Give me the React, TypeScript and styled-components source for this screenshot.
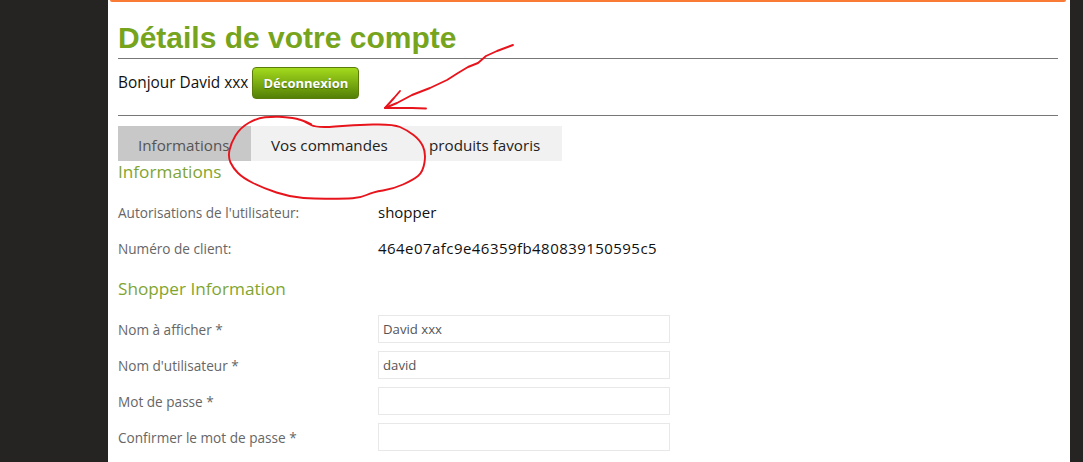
import React from "react";
import styled, { createGlobalStyle } from "styled-components";

const Global = createGlobalStyle`
  html, body { margin: 0; padding: 0; height: 462px; overflow: hidden; background: #252423; }
  #root { height: 462px; }
`;

const Stage = styled.div`
  position: relative;
  width: 1083px;
  height: 462px;
  overflow: hidden;
  background: #252423;
`;

const Page = styled.main`
  box-sizing: border-box;
  width: 962px;
  height: 462px;
  margin-left: 108px;
  padding: 0 12px 0 2px;
  background: #fff;
  font-family: "Open Sans", "Noto Sans", sans-serif;
  overflow: hidden;
`;

const TopBar = styled.div`
  width: 956px;
  height: 2px;
  background: #f97b35;
  border-radius: 0 0 6px 6px;
`;

const Content = styled.div`
  padding-left: 8px;
`;

const Title = styled.h1`
  margin: 0;
  padding-top: 16px;
  height: 40px;
  font: bold 30px/39px "Liberation Sans", Arial, sans-serif;
  color: #76a41c;
`;

const Rule = styled.hr`
  margin: 0;
  border: 0;
  height: 1px;
  background: #777;
`;

const Greeting = styled.div`
  display: flex;
  align-items: center;
  gap: 4px;
  height: 56px;
  padding-bottom: 8px;
  box-sizing: border-box;
  font-size: 15.4px;
  line-height: 20px;
  color: #111;
`;

const LogoutButton = styled.button`
  box-sizing: border-box;
  width: 107px;
  height: 32px;
  padding: 0;
  border: 1px solid #5a7d0a;
  border-radius: 4px;
  background: linear-gradient(#a3da1d, #548006);
  color: #fff;
  font: bold 13px "Open Sans", sans-serif;
  text-shadow: 0 1px 1px rgba(0, 0, 0, 0.35);
`;

const Tabs = styled.div`
  display: flex;
  margin-top: 10px;
  height: 35px;
`;

const Tab = styled.div<{ $active?: boolean; $width: number }>`
  box-sizing: border-box;
  width: ${(p) => p.$width}px;
  padding-left: 20px;
  font-size: 15.2px;
  line-height: 39px;
  white-space: nowrap;
  overflow: hidden;
  background: ${(p) => (p.$active ? "#c8c8c8" : "#f1f1f1")};
  color: ${(p) => (p.$active ? "#555" : "#222")};
`;

const SectionTitle = styled.h2<{ $top: number }>`
  margin: ${(p) => p.$top}px 0 0;
  font-size: 17.2px;
  font-weight: 400;
  line-height: 22px;
  color: #7fa531;
`;

const InfoRows = styled.div`
  display: flex;
  flex-direction: column;
  margin-top: 19px;
  gap: 16px;
`;

const InfoRow = styled.div`
  display: grid;
  grid-template-columns: 260px auto;
  align-items: center;
  height: 20px;
`;

const Label = styled.span`
  font-size: 13.6px;
  color: #666;
`;

const Value = styled.span<{ $spaced?: boolean }>`
  font-size: 15px;
  letter-spacing: ${(p) => (p.$spaced ? "0.45px" : "0")};
  color: #111;
`;

const Form = styled.div`
  display: flex;
  flex-direction: column;
  gap: 8px;
  margin-top: 15px;
`;

const FormRow = styled.label`
  display: grid;
  grid-template-columns: 260px 292px;
  align-items: center;
  height: 28px;
`;

const Field = styled.input`
  box-sizing: border-box;
  width: 292px;
  height: 28px;
  padding: 0 4px;
  border: 1px solid #e8e8e8;
  background: #fff;
  font: 13.2px "Open Sans", sans-serif;
  color: #555;
  outline: none;
`;

const Scribble = styled.svg`
  position: absolute;
  inset: 0;
  pointer-events: none;
`;

const fields: [string, string][] = [
  ["Nom à afficher *", "David xxx"],
  ["Nom d'utilisateur *", "david"],
  ["Mot de passe *", ""],
  ["Confirmer le mot de passe *", ""],
];

type Pt = [number, number];

function smooth(pts: Pt[]): string {
  let d = `M${pts[0][0]} ${pts[0][1]}`;
  for (let i = 1; i < pts.length - 1; i++) {
    const mx = (pts[i][0] + pts[i + 1][0]) / 2;
    const my = (pts[i][1] + pts[i + 1][1]) / 2;
    d += ` Q${pts[i][0]} ${pts[i][1]} ${mx} ${my}`;
  }
  const last = pts[pts.length - 1];
  return `${d} L${last[0]} ${last[1]}`;
}

const circle: Pt[] = [
  [311, 124], [300, 119], [285, 117], [273, 116.5], [257, 118], [240, 128], [231, 143], [228, 157],
  [233, 168], [243, 178], [263, 188], [290, 197], [317, 199], [345, 198.5], [360, 198], [373, 192],
  [393, 189], [413, 180], [423, 172], [426, 153], [420, 140], [407, 130], [393, 124], [353, 125],
  [317, 128], [305, 122],
];

export default function App() {
  return (
    <Stage>
      <Global />
      <Page>
        <TopBar />
        <Content>
          <Title>Détails de votre compte</Title>
          <Rule />
          <Greeting>
            Bonjour David xxx
            <LogoutButton>Déconnexion</LogoutButton>
          </Greeting>
          <Rule />
          <Tabs>
            <Tab $active $width={133}>Informations</Tab>
            <Tab $width={158}>Vos commandes</Tab>
            <Tab $width={153}>produits favoris</Tab>
          </Tabs>
          <SectionTitle $top={0}>Informations</SectionTitle>
          <InfoRows>
            <InfoRow>
              <Label>Autorisations de l'utilisateur:</Label>
              <Value>shopper</Value>
            </InfoRow>
            <InfoRow>
              <Label>Numéro de client:</Label>
              <Value $spaced>464e07afc9e46359fb480839150595c5</Value>
            </InfoRow>
          </InfoRows>
          <SectionTitle $top={20}>Shopper Information</SectionTitle>
          <Form>
            {fields.map(([label, value]) => (
              <FormRow key={label}>
                <Label>{label}</Label>
                <Field defaultValue={value} />
              </FormRow>
            ))}
          </Form>
        </Content>
      </Page>
      <Scribble width="1083" height="462" viewBox="0 0 1083 462" fill="none" stroke="#e8141c" strokeWidth="1.9" strokeLinecap="round" strokeLinejoin="round">
        <path d="M513 45 L497 51 L486 56 L478 63 L468 67 L458 73 L447 80 L430 88 L412 95 L397 103 L385 108 L412 108 L426 108.500" />
        <path d="M385 108 L394 98 L400 91" />
        <path d={smooth(circle)} />
      </Scribble>
    </Stage>
  );
}
